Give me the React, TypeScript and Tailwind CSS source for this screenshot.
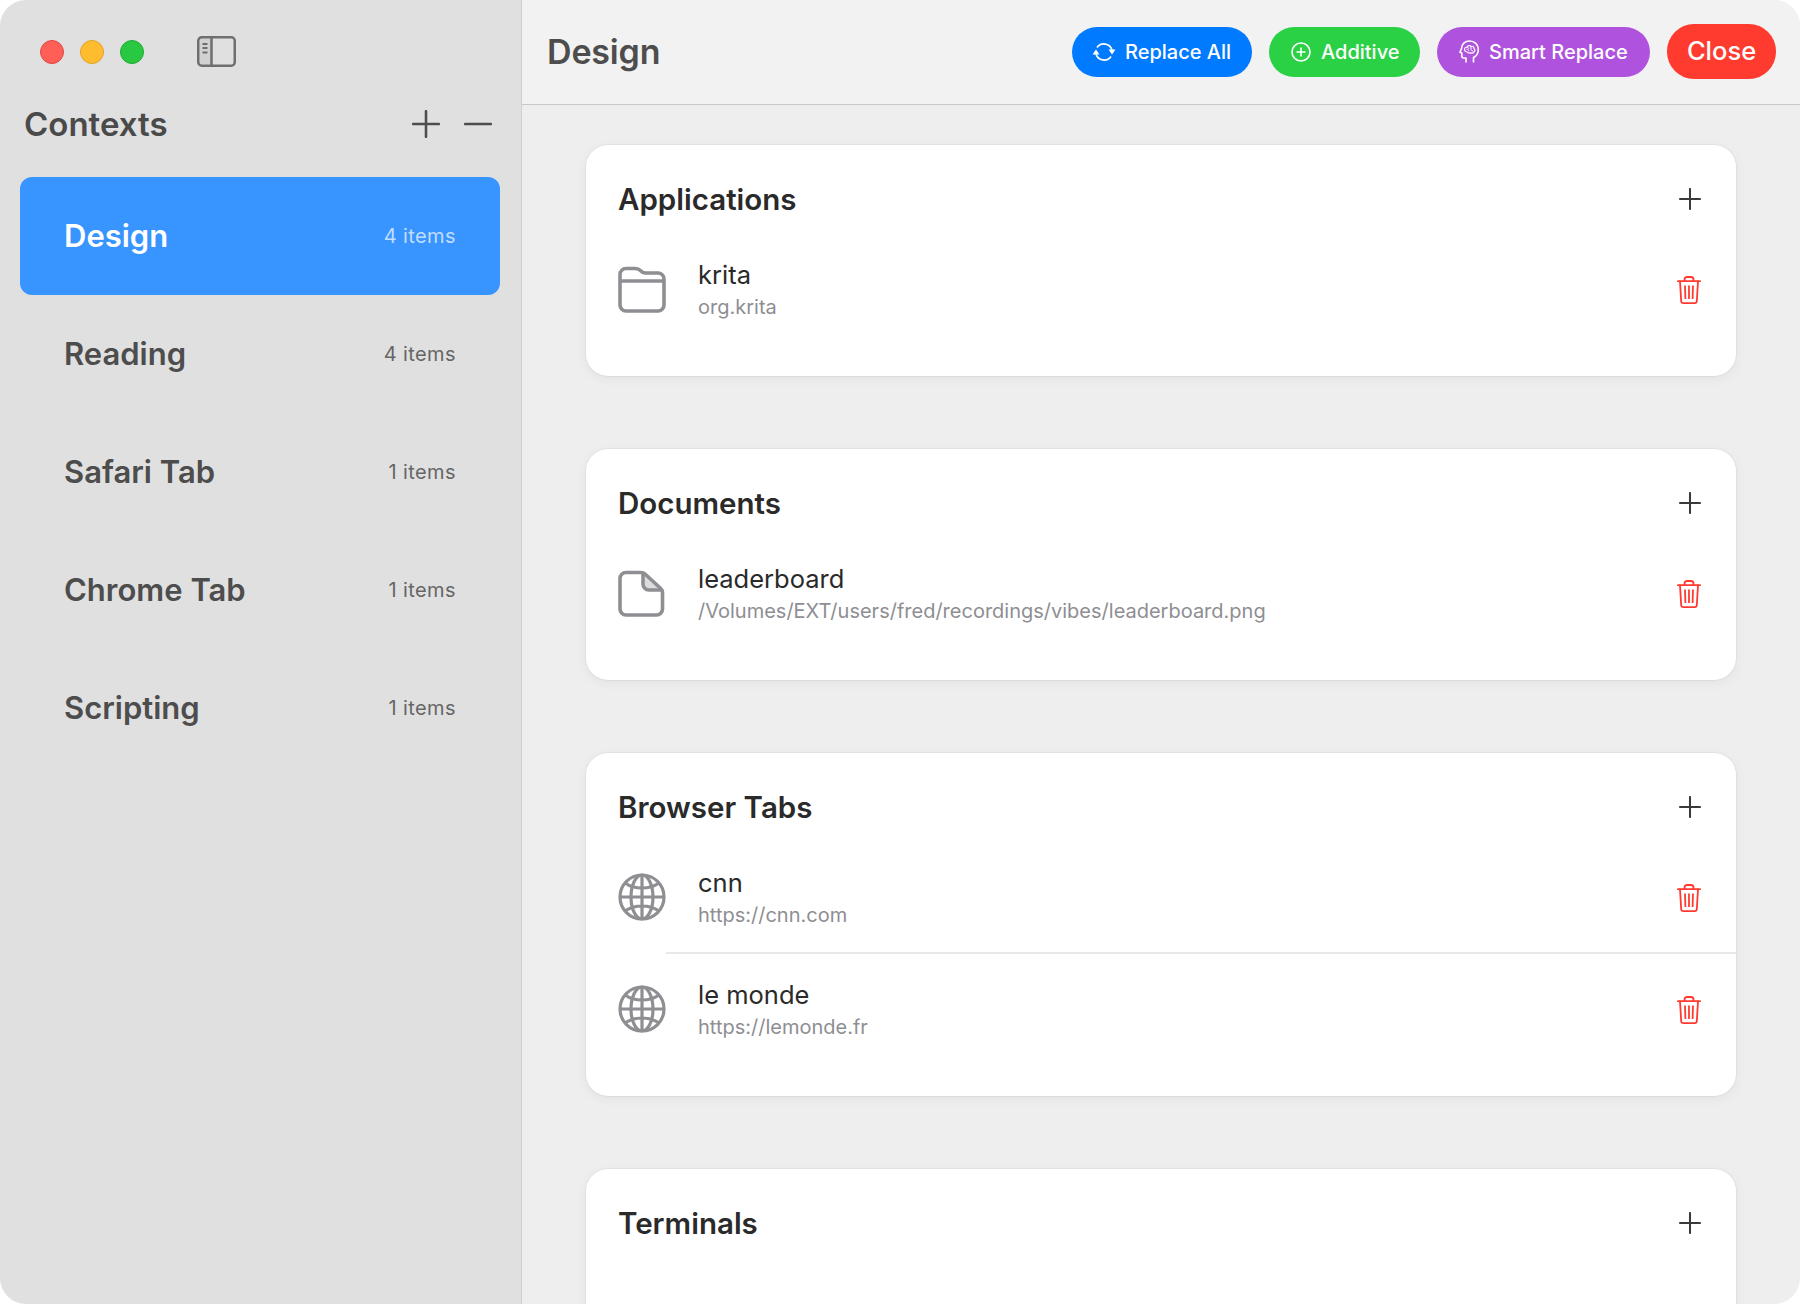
const CONTEXTS = [
  { name: "Design", count: "4 items" },
  { name: "Reading", count: "4 items" },
  { name: "Safari Tab", count: "1 items" },
  { name: "Chrome Tab", count: "1 items" },
  { name: "Scripting", count: "1 items" },
];

function PlusIcon({ size, stroke }: { size: number; stroke: number }) {
  return (
    <svg width={size} height={size} viewBox="0 0 24 24" fill="none" stroke="currentColor" strokeWidth={stroke} strokeLinecap="round">
      <path d="M12 1v22M1 12h22" />
    </svg>
  );
}

function SidebarToggle() {
  return (
    <svg width="39" height="31" viewBox="0 0 39 31" fill="none" stroke="#6f6f6f">
      <rect x="1.25" y="1.25" width="36.5" height="28.5" rx="3.5" strokeWidth="2.5" />
      <path d="M14.5 1v29" strokeWidth="2.5" />
      <path d="M5.5 8h5M5.5 12h5M5.5 16.500h5" strokeWidth="1.8" />
      <rect x="2.5" y="2.500" width="12" height="26" fill="#6f6f6f" fillOpacity="0.12" stroke="none" />
    </svg>
  );
}

function RefreshIcon() {
  return (
    <svg width="24" height="20" viewBox="0 0 24 20" fill="none" stroke="white" strokeWidth="1.7">
      <path d="M5 5.500A8.500 8.500 0 0 1 20 8" />
      <path d="M19 14.500A8.500 8.500 0 0 1 4 12" />
      <path d="M16.500 7.500h7l-3.500 5z" fill="white" stroke="none" />
      <path d="M.5 12.500h7l-3.500-5z" fill="white" stroke="none" />
    </svg>
  );
}

function PlusCircleIcon() {
  return (
    <svg width="20" height="20" viewBox="0 0 20 20" fill="none" stroke="white" strokeWidth="1.6">
      <circle cx="10" cy="10" r="9" />
      <path d="M10 5.500v9M5.500 10h9" />
    </svg>
  );
}

function BrainHeadIcon() {
  return (
    <svg width="20" height="23" viewBox="0 0 20 23" fill="none" stroke="white" strokeWidth="1.6" strokeLinejoin="round" strokeLinecap="round">
      <path d="M14.500 22v-4.500c2.800-1.500 4.800-4 4.800-7.800C19.300 4.500 15.500 1 10.500 1 5.800 1 2.600 4.300 2.600 8.300L1 12.300l1.800.7v3c0 1.300.8 2 2 2H7v4" />
      <path d="M5.500 9.500c0-1.700 1.200-2.500 2.500-2.200.4-1.700 3-2.300 4-.9 1.700-.5 3.300.6 3 2.200 1.300.8 1.100 2.800-.2 3.300-.6 1.400-2.300 1.700-3.400.8-1.100.7-2.600.3-3.100-.7-1.500 0-2.800-1-2.800-2.500z" strokeWidth="1.2" />
      <path d="M8 9.300c1.100 0 1.800.6 1.800 1.600M12 7.200v2.200c0 .9.700 1.400 1.600 1.400M8.800 7.500c0 .7.500 1 1 1" strokeWidth="1" />
    </svg>
  );
}

function FolderIcon() {
  return (
    <svg width="48" height="47" viewBox="0 0 48 47" fill="none" stroke="#8e8e93" strokeWidth="3.6">
      <path d="M2 8.500a6 6 0 0 1 6-6h9.500c2.500 0 3.800.8 5.200 2.200 1.100 1.200 2.300 2.300 4.300 2.300h13a6 6 0 0 1 6 6v26a6 6 0 0 1-6 6H8a6 6 0 0 1-6-6z" />
      <path d="M2 15h44" />
    </svg>
  );
}

function DocIcon() {
  return (
    <svg width="48" height="47" viewBox="0 0 48 47" fill="none" stroke="#8e8e93" strokeWidth="3.6">
      <path d="M25 3v11a6 6 0 0 0 6 6h14z" fill="#dcdce0" stroke="none" />
      <path d="M8 2.500h15c1.800 0 3 .5 4.300 1.700l15.200 14c1.400 1.300 2 2.500 2 4.300V39a6 6 0 0 1-6 6H8a6 6 0 0 1-6-6V8.500a6 6 0 0 1 6-6z" />
      <path d="M25 3v11a6 6 0 0 0 6 6h13" />
    </svg>
  );
}

function GlobeIcon() {
  return (
    <svg width="48" height="48" viewBox="0 0 48 48" fill="none" stroke="#8e8e93" strokeWidth="3.2">
      <circle cx="24" cy="24" r="22" />
      <ellipse cx="24" cy="24" rx="11" ry="22" />
      <path d="M24 2v44M2 24h44M7 10c5 3.500 11 5 17 5s12-1.500 17-5M7 38c5-3.500 11-5 17-5s12 1.500 17 5" />
    </svg>
  );
}

function TrashIcon() {
  return (
    <svg width="24" height="28" viewBox="0 0 24 28" fill="none" stroke="#ff3b30" strokeWidth="1.800" strokeLinecap="round">
      <path d="M.9 5.200h22.200" />
      <path d="M7.500 5V3.500C7.500 2 8.500 1 10 1h4c1.500 0 2.500 1 2.500 2.500V5" />
      <path d="M3 5.500l1.200 19.700c.1 1.200 1 1.900 2 1.900h11.600c1 0 1.900-.7 2-1.900L21 5.500" />
      <path d="M8 9.500l.4 13.500M12 9.500V23M16 9.500L15.600 23" strokeLinecap="butt" />
    </svg>
  );
}

function Row({ icon, title, sub }: { icon: React.ReactNode; title: string; sub: string }) {
  return (
    <div className="flex h-[112px] items-center pl-[32px] pr-[35px]">
      <div className="flex w-[48px] shrink-0 justify-center">{icon}</div>
      <div className="ml-[32px] flex-1 pt-[2px]">
        <div className="text-[25.5px] leading-[32px] text-[#2a2a2a]">{title}</div>
        <div className="mt-[1px] text-[20px] leading-[30px] text-[#8e8e93]">{sub}</div>
      </div>
      <div className="pt-[1px]">
        <TrashIcon />
      </div>
    </div>
  );
}

function Card({ title, height, children }: { title: string; height: string; children?: React.ReactNode }) {
  return (
    <section className={`${height} shrink-0 rounded-[22px] bg-white shadow-[0_0_0_1px_rgba(0,0,0,0.035),0_3px_12px_rgba(0,0,0,0.05)]`}>
      <div className="flex h-[88px] items-start justify-between pl-[32px] pr-[35px] pt-[34px]">
        <h2 className="text-[29.5px] font-semibold leading-[40px] text-[#2a2a2a]">{title}</h2>
        <div className="mt-[9px] text-[#3a3a3a]">
          <PlusIcon size={22} stroke={2.200} />
        </div>
      </div>
      {children}
    </section>
  );
}

export default function App() {
  return (
    <div className="h-[1304px] w-[1800px] overflow-hidden bg-white font-['Inter',sans-serif]">
      <div className="flex h-full overflow-hidden rounded-[26px]">
        <aside className="w-[522px] shrink-0 border-r border-[#cfcfcf] bg-[#e0e0e0] pl-[20px] pr-[21px]">
          <div className="flex h-[104px] items-start pl-[20px] pt-[36px]">
            <div className="mt-[4px] flex gap-[16px]">
              <span className="size-[24px] rounded-full border border-[#e2463f] bg-[#ff5f57]" />
              <span className="size-[24px] rounded-full border border-[#e1a325] bg-[#febc2e]" />
              <span className="size-[24px] rounded-full border border-[#1faa34] bg-[#28c840]" />
            </div>
            <div className="ml-[53px]">
              <SidebarToggle />
            </div>
          </div>
          <div className="flex h-[40px] items-center justify-between pl-[4px] pr-[8px]">
            <h1 className="text-[33px] font-semibold leading-[40px] text-[#4a4a4a]">Contexts</h1>
            <div className="flex items-center gap-[24px] text-[#4d4d4d]">
              <PlusIcon size={28} stroke={2.200} />
              <svg width="28" height="28" viewBox="0 0 24 24" fill="none" stroke="currentColor" strokeWidth="2.200" strokeLinecap="round">
                <path d="M1 12h22" />
              </svg>
            </div>
          </div>
          <ul className="mt-[33px]">
            {CONTEXTS.map((c, i) => (
              <li
                key={c.name}
                className={`flex h-[118px] items-center justify-between rounded-[12px] pl-[44px] pr-[44px] ${i === 0 ? "bg-[#3894ff]" : ""}`}
              >
                <span className={`text-[31px] font-semibold ${i === 0 ? "text-white" : "text-[#4d4d4d]"}`}>{c.name}</span>
                <span className={`text-[20px] tracking-[0.02em] ${i === 0 ? "text-white/70" : "text-[#666666]"}`}>{c.count}</span>
              </li>
            ))}
          </ul>
        </aside>

        <main className="min-w-0 flex-1 bg-[#eeeeee]">
          <header className="flex h-[105px] items-center justify-between border-b border-[#c8c8c8] bg-[#f2f2f2] pl-[25px] pr-[24px] pb-[1px]">
            <h1 className="text-[34px] font-semibold tracking-[-0.005em] text-[#4d4d4d]">Design</h1>
            <div className="flex items-center gap-[17px] text-[20px] font-medium text-white">
              <button className="flex h-[50px] w-[180px] items-center gap-[9px] rounded-[25px] bg-[#007aff] pl-[20px]">
                <RefreshIcon />
                Replace All
              </button>
              <button className="flex h-[50px] w-[151px] items-center gap-[10px] rounded-[25px] bg-[#2ad145] pl-[22px]">
                <PlusCircleIcon />
                Additive
              </button>
              <button className="flex h-[50px] w-[213px] items-center gap-[10px] rounded-[25px] bg-[#af52de] pl-[22px]">
                <BrainHeadIcon />
                Smart Replace
              </button>
              <button className="h-[55px] w-[109px] rounded-[27px] bg-[#ff3b30] text-[25.5px]">Close</button>
            </div>
          </header>
          <div className="flex h-[1199px] flex-col gap-[73px] overflow-hidden pl-[64px] pr-[64px] pt-[40px]">
            <Card title="Applications" height="h-[231px]">
              <Row icon={<FolderIcon />} title="krita" sub="org.krita" />
            </Card>
            <Card title="Documents" height="h-[231px]">
              <Row icon={<DocIcon />} title="leaderboard" sub="/Volumes/EXT/users/fred/recordings/vibes/leaderboard.png" />
            </Card>
            <Card title="Browser Tabs" height="h-[343px]">
              <Row icon={<GlobeIcon />} title="cnn" sub="https://cnn.com" />
              <div className="-my-px ml-[80px] h-[2px] bg-[#e8e8e8]" />
              <Row icon={<GlobeIcon />} title="le monde" sub="https://lemonde.fr" />
            </Card>
            <Card title="Terminals" height="h-[232px]" />
          </div>
        </main>
      </div>
    </div>
  );
}
